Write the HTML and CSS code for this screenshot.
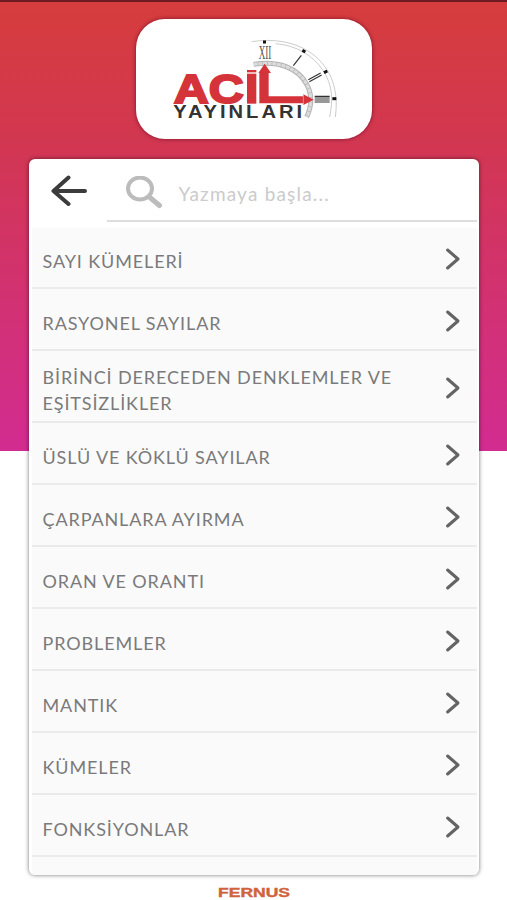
FILE: index.html
```html
<!doctype html>
<html lang="tr">
<head>
  <meta charset="utf-8">
  <meta name="viewport" content="width=device-width, initial-scale=1">
  <title>Acil Yayınları</title>
  <link rel="stylesheet" href="styles.css">
</head>

<body>
  <!-- Chevron shared by all the rows -->
  <svg class="sprite">
    <symbol id="chevron" viewBox="0 0 16 24">
      <path d="M2.6 3 L13 12 L2.6 21" />
    </symbol>
  </svg>

  <header class="logo">
    <svg viewBox="19 26 708 360" role="img" aria-label="Acil Yayınları">
      <!-- Clock face -->
      <g class="clock">
        <path d="M366 94 C430 84 490 94 535 122 C595 160 630 225 617 320" />
        <path d="M438 100 C500 105 550 135 580 180 C610 225 610 270 600 320" />
        <path class="ring" d="M372 162 C450 150 505 175 530 220 C550 255 545 290 531 320" />
        <path class="ring-gap" d="M372 162 C450 150 505 175 530 220 C550 255 545 290 531 320" />
      </g>
      <g class="ticks">
        <path d="M400 95 H409" />
        <path d="M518 120 L527 125" />
        <path d="M583 187 L593 182" />
        <path d="M608 265 H620" />
      </g>
      <g class="numerals">
        <path d="M515 135 L491 166" />
        <path d="M536 208 L573 188 M539 214 L576 194" />
        <path d="M555 258 H600 M555 263 H600 M555 269 H600 M555 275 H600" />
      </g>
      <text class="twelve" x="387" y="147" textLength="38" lengthAdjust="spacingAndGlyphs">XII</text>

      <!-- Name, with the clock hands as its last letter -->
      <g class="brand">
        <text x="132" y="277" textLength="210" lengthAdjust="spacingAndGlyphs">AC</text>
        <rect x="352" y="179" width="28" height="7" />
        <rect x="352" y="190" width="28" height="90" />
        <path d="M405 160 L424 188 H417 V258 H521 V252 L552 268 L521 284 V279 H389 V188 H386 Z" />
        <path class="cut" d="M521 253 V283" />
      </g>
      <text class="brand-sub" transform="translate(131 323) scale(1.12 1)" textLength="345" lengthAdjust="spacing">YAYINLARI</text>
    </svg>
  </header>

  <main class="panel">
    <div class="search">
      <svg class="back" viewBox="0 0 36 32">
        <path d="M17.5 2.5 L2.5 16 L17.5 29 M3 16 H34" />
      </svg>
      <div class="search-field">
        <svg class="magnifier" viewBox="0 0 38 34">
          <ellipse cx="15" cy="12.5" rx="12" ry="11" />
          <path d="M25.5 22 L34.5 29.5" />
        </svg>
        <input type="text" placeholder="Yazmaya başla...">
      </div>
    </div>

    <ul class="topics">
      <li><span>SAYI KÜMELERİ</span><svg><use href="#chevron" /></svg></li>
      <li><span>RASYONEL SAYILAR</span><svg><use href="#chevron" /></svg></li>
      <li class="tall"><span>BİRİNCİ DERECEDEN DENKLEMLER VE<br>EŞİTSİZLİKLER</span><svg><use href="#chevron" /></svg></li>
      <li><span>ÜSLÜ VE KÖKLÜ SAYILAR</span><svg><use href="#chevron" /></svg></li>
      <li><span>ÇARPANLARA AYIRMA</span><svg><use href="#chevron" /></svg></li>
      <li><span>ORAN VE ORANTI</span><svg><use href="#chevron" /></svg></li>
      <li><span>PROBLEMLER</span><svg><use href="#chevron" /></svg></li>
      <li><span>MANTIK</span><svg><use href="#chevron" /></svg></li>
      <li><span>KÜMELER</span><svg><use href="#chevron" /></svg></li>
      <li><span>FONKSİYONLAR</span><svg><use href="#chevron" /></svg></li>
    </ul>
  </main>

  <footer>
    <svg class="fernus" viewBox="0 0 76 17">
      <text x="2" y="14" textLength="72" lengthAdjust="spacingAndGlyphs">FERNUS</text>
    </svg>
  </footer>
</body>
</html>
```
FILE: styles.css
```css
* {
  box-sizing: border-box;
}

body {
  margin: 0;
  height: 900px;
  overflow: hidden;
  border-top: 2px solid #6d1a22;
  background: #fff linear-gradient(#d63d3c, #d23750 30%, #d22c91) no-repeat 0 0 / 100% 451px;
  font-family: Lato, "Open Sans", sans-serif;
  display: flex;
  flex-direction: column;
  align-items: center;
}

.sprite {
  display: none;
}

.logo {
  flex-shrink: 0;
  width: 236px;
  height: 120px;
  margin-top: 17px;
  background: #fff;
  border-radius: 29px;
  box-shadow: 0 0 4px rgba(90, 0, 30, 0.7);
}

.logo svg {
  display: block;
  width: 100%;
  height: 100%;
}

.clock path {
  fill: none;
  stroke: #c2c2c2;
  stroke-width: 2.5;
}

.clock .ring {
  stroke: #b4b4b4;
  stroke-width: 15;
}

.clock .ring-gap {
  stroke: #dcdcdc;
  stroke-width: 9;
  stroke-dasharray: 12 2;
}

.ticks path {
  stroke: #111;
  stroke-width: 9;
}

.numerals path {
  fill: none;
  stroke: #333;
  stroke-width: 3.5;
}

.twelve {
  font: 54px "Liberation Serif", serif;
  fill: #555;
}

.brand {
  fill: #d5333a;
}

.brand text {
  font: bold 124px "Liberation Sans", sans-serif;
  stroke: #d5333a;
  stroke-width: 6;
}

.brand .cut {
  stroke: #f3b5b5;
  stroke-width: 2;
}

.brand-sub {
  font: bold 54px "Liberation Sans", sans-serif;
  fill: #333;
}

.panel {
  flex-shrink: 0;
  width: 450px;
  height: 716px;
  margin-top: 20px;
  padding: 0 2px 0 3px;
  overflow: hidden;
  background: #fff;
  border-radius: 6px;
  box-shadow: 0 0 4px rgba(0, 0, 0, 0.55);
}

.search {
  display: flex;
  height: 69px;
  padding-left: 19px;
}

.back {
  width: 36px;
  height: 32px;
  margin-top: 16px;
}

.back path {
  fill: none;
  stroke: #3c3c3c;
  stroke-width: 4;
  stroke-linecap: round;
  stroke-linejoin: round;
}

.search-field {
  display: flex;
  flex: 1;
  height: 63px;
  margin-left: 20px;
  padding-left: 18px;
  border-bottom: 2px solid #dedede;
}

.magnifier {
  width: 38px;
  height: 34px;
  margin-top: 17px;
}

.magnifier ellipse,
.magnifier path {
  fill: none;
  stroke: #bcbcbc;
  stroke-width: 4;
  stroke-linecap: round;
}

.magnifier path {
  stroke-width: 5;
}

.search-field input {
  flex: 1;
  min-width: 0;
  margin-left: 16px;
  padding: 8px 0 0;
  border: none;
  outline: none;
  background: none;
  font: 19px Lato, sans-serif;
  letter-spacing: 1.2px;
}

.search-field input::placeholder {
  color: #cbcbcb;
}

.topics {
  height: 647px;
  margin: 0;
  padding: 0;
  list-style: none;
  background: #fafafa;
}

.topics li {
  display: flex;
  justify-content: space-between;
  align-items: center;
  height: 62px;
  padding: 0 16px 0 11px;
  border-bottom: 2px solid #ebebeb;
  color: #7a7a7a;
  font-size: 18px;
  line-height: 26px;
  letter-spacing: 0.88px;
}

.topics .tall {
  height: 72px;
}

/* the first row is one pixel shorter, under the search bar */
.topics li:first-child {
  height: 61px;
}

.topics span {
  padding-top: 7px;
}

.topics svg {
  width: 16px;
  height: 24px;
  margin-top: 3px;
  fill: none;
  stroke: #646464;
  stroke-width: 3;
  stroke-linecap: round;
  stroke-linejoin: round;
}

footer {
  margin-top: 8px;
}

.fernus {
  display: block;
  width: 76px;
  height: 17px;
}

.fernus text {
  font: bold 13px "Liberation Sans", sans-serif;
  fill: #d0623c;
  stroke: #d0623c;
  stroke-width: 0.4;
}
```
